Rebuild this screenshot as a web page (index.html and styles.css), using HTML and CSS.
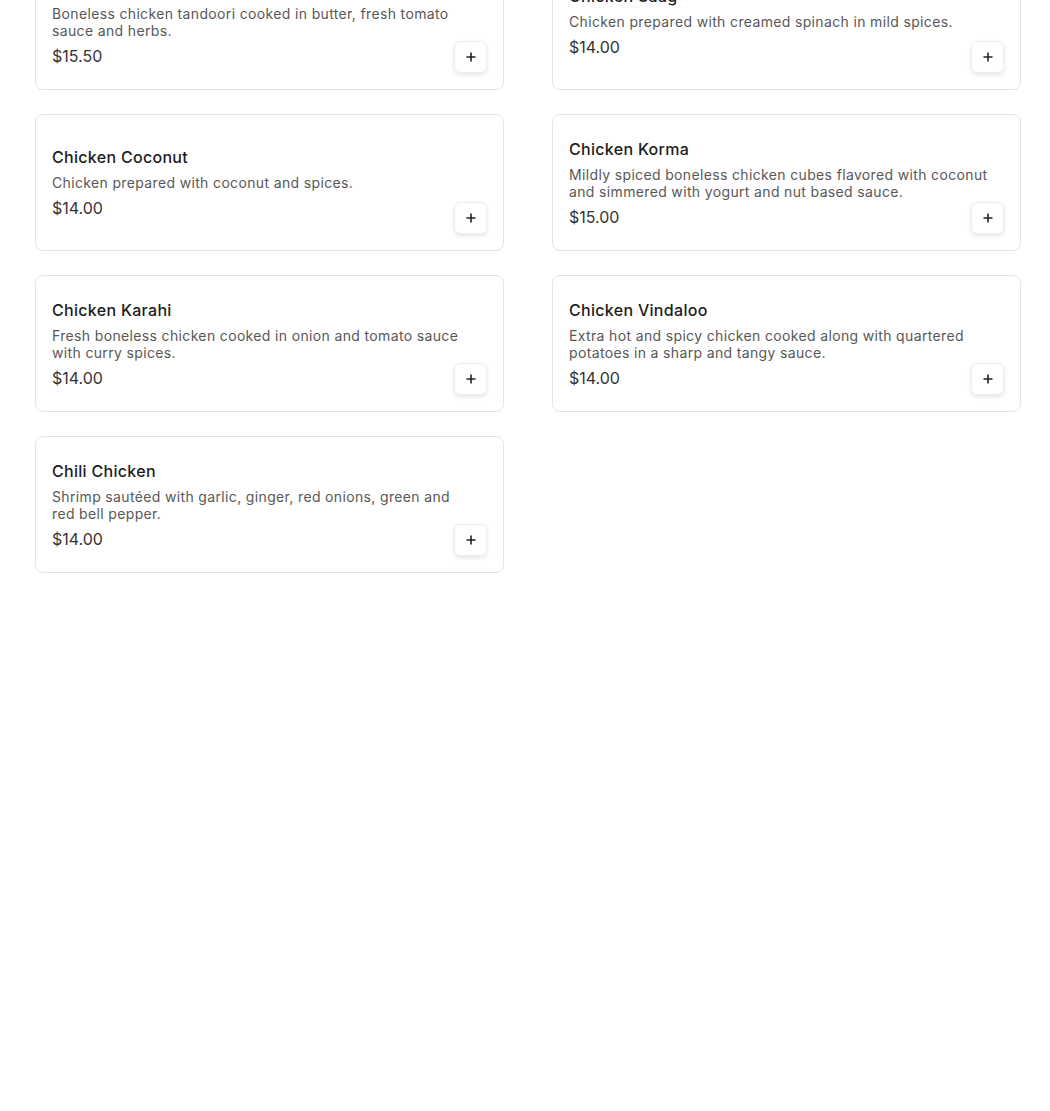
FILE: index.html
```html
<!DOCTYPE html>
<html lang="en">
<head>
    <meta charset="UTF-8">
    <meta name="viewport" content="width=device-width, initial-scale=1.0">
    <title>Chicken Entrees</title>
    <link rel="stylesheet" href="styles.css">
</head>
<body>
    <div class="menu-grid">
        <div class="menu-item">
            <div class="item-info">
                <div class="item-name">Butter Chicken</div>
                <div class="item-desc">Boneless chicken tandoori cooked in butter, fresh tomato sauce and herbs.</div>
                <div class="item-price">$15.50</div>
            </div>
            <button class="add-btn" aria-label="Add"><svg width="12" height="12" viewBox="0 0 12 12"><path d="M6 1.5v9M1.5 6h9" stroke="#222" stroke-width="1.6"/></svg></button>
        </div>
        <div class="menu-item">
            <div class="item-info">
                <div class="item-name">Chicken Saag</div>
                <div class="item-desc">Chicken prepared with creamed spinach in mild spices.</div>
                <div class="item-price">$14.00</div>
            </div>
            <button class="add-btn" aria-label="Add"><svg width="12" height="12" viewBox="0 0 12 12"><path d="M6 1.5v9M1.5 6h9" stroke="#222" stroke-width="1.6"/></svg></button>
        </div>
        <div class="menu-item">
            <div class="item-info">
                <div class="item-name">Chicken Coconut</div>
                <div class="item-desc">Chicken prepared with coconut and spices.</div>
                <div class="item-price">$14.00</div>
            </div>
            <button class="add-btn" aria-label="Add"><svg width="12" height="12" viewBox="0 0 12 12"><path d="M6 1.5v9M1.5 6h9" stroke="#222" stroke-width="1.6"/></svg></button>
        </div>
        <div class="menu-item">
            <div class="item-info">
                <div class="item-name">Chicken Korma</div>
                <div class="item-desc">Mildly spiced boneless chicken cubes flavored with coconut and simmered with yogurt and nut based sauce.</div>
                <div class="item-price">$15.00</div>
            </div>
            <button class="add-btn" aria-label="Add"><svg width="12" height="12" viewBox="0 0 12 12"><path d="M6 1.5v9M1.5 6h9" stroke="#222" stroke-width="1.6"/></svg></button>
        </div>
        <div class="menu-item">
            <div class="item-info">
                <div class="item-name">Chicken Karahi</div>
                <div class="item-desc">Fresh boneless chicken cooked in onion and tomato sauce with curry spices.</div>
                <div class="item-price">$14.00</div>
            </div>
            <button class="add-btn" aria-label="Add"><svg width="12" height="12" viewBox="0 0 12 12"><path d="M6 1.5v9M1.5 6h9" stroke="#222" stroke-width="1.6"/></svg></button>
        </div>
        <div class="menu-item">
            <div class="item-info">
                <div class="item-name">Chicken Vindaloo</div>
                <div class="item-desc">Extra hot and spicy chicken cooked along with quartered potatoes in a sharp and tangy sauce.</div>
                <div class="item-price">$14.00</div>
            </div>
            <button class="add-btn" aria-label="Add"><svg width="12" height="12" viewBox="0 0 12 12"><path d="M6 1.5v9M1.5 6h9" stroke="#222" stroke-width="1.6"/></svg></button>
        </div>
        <div class="menu-item">
            <div class="item-info">
                <div class="item-name">Chili Chicken</div>
                <div class="item-desc">Shrimp sautéed with garlic, ginger, red onions, green and red bell pepper.</div>
                <div class="item-price">$14.00</div>
            </div>
            <button class="add-btn" aria-label="Add"><svg width="12" height="12" viewBox="0 0 12 12"><path d="M6 1.5v9M1.5 6h9" stroke="#222" stroke-width="1.6"/></svg></button>
        </div>
    </div>
</body>
</html>
```

FILE: styles.css
```css
body {
    font-family: Inter, "Open Sans", sans-serif;
    margin: 0;
    background-color: #fff;
    color: #1c1c1c;
}

.menu-grid {
    display: grid;
    grid-template-columns: repeat(2, 469px);
    column-gap: 48px;
    row-gap: 24px;
    margin-top: -47px;
    padding-left: 35px;
}

.menu-item {
    position: relative;
    display: flex;
    align-items: center;
    box-sizing: border-box;
    height: 137px;
    padding: 16px;
    border: 1px solid #e4e4e4;
    border-radius: 8px;
}

.item-info {
    width: 420px;
}

.item-name {
    font-size: 16px;
    font-weight: 500;
    line-height: 20px;
    letter-spacing: 0.3px;
    margin-bottom: 7px;
}

.item-desc {
    font-size: 14px;
    line-height: 17px;
    letter-spacing: 0.35px;
    color: #585858;
    margin-bottom: 7px;
}

.item-price {
    font-size: 16px;
    line-height: 20px;
    color: #333;
}

.add-btn {
    position: absolute;
    right: 16px;
    bottom: 16px;
    width: 33px;
    height: 32px;
    display: flex;
    align-items: center;
    justify-content: center;
    padding: 0;
    background: #fff;
    border: 1px solid #eee;
    border-radius: 6px;
    box-shadow: 0 2px 4px rgba(0, 0, 0, 0.1);
    cursor: pointer;
}
```
